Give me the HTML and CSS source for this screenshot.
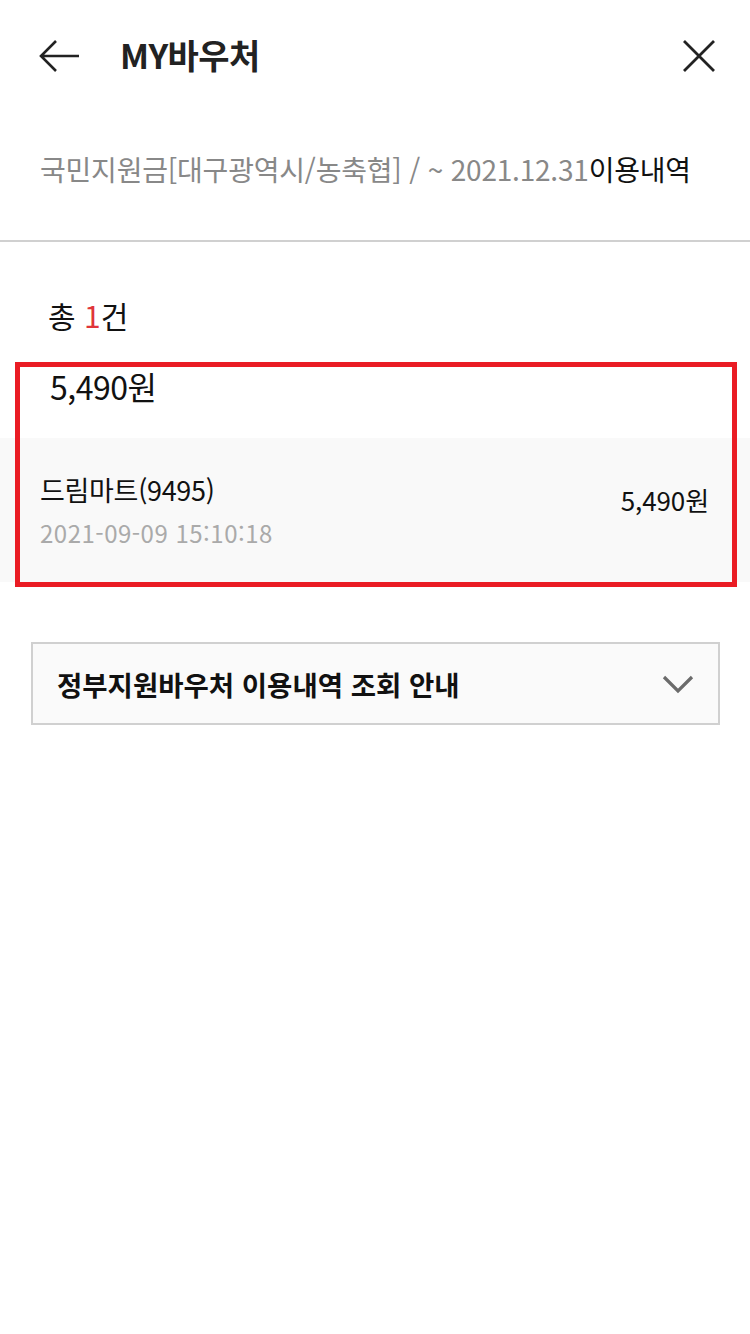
FILE: index.html
```html
<!DOCTYPE html>
<html lang="ko">

<head>
    <meta charset="UTF-8">
    <meta name="viewport" content="width=device-width, initial-scale=1.0">
    <title>MY바우처</title>
    <link rel="stylesheet" href="styles.css">
</head>

<body>
    <div class="header">
        <svg class="icon-back" width="42" height="34" viewBox="0 0 42 34">
            <path d="M40 17H3M17 2L2 17L17 32" fill="none" stroke="#222" stroke-width="2.6" />
        </svg>
        <h1 class="title">MY바우처</h1>
        <svg class="icon-close" width="34" height="34" viewBox="0 0 34 34">
            <path d="M2 2L32 32M32 2L2 32" fill="none" stroke="#222" stroke-width="2.8" />
        </svg>
    </div>

    <div class="voucher-name">
        <span class="gray">국민지원금[대구광역시/농축협] / ~ 2021.12.31</span>이용내역
    </div>

    <div class="count">총 <span class="red">1</span>건</div>

    <div class="history">
        <div class="total">5,490원</div>
        <div class="item">
            <div class="item-left">
                <p class="store">드림마트(9495)</p>
                <p class="date">2021-09-09 15:10:18</p>
            </div>
            <div class="item-price">5,490원</div>
        </div>
        <div class="highlight"></div>
    </div>

    <div class="guide">
        <span class="guide-title">정부지원바우처 이용내역 조회 안내</span>
        <svg class="icon-down" width="32" height="20" viewBox="0 0 32 20">
            <path d="M2 3L16 17L30 3" fill="none" stroke="#6b6b6b" stroke-width="3.2" />
        </svg>
    </div>
</body>

</html>
```

FILE: styles.css
```css
body {
    margin: 0;
    padding: 0;
    font-family: "Noto Sans CJK KR", "Noto Sans", sans-serif;
    background-color: #fff;
    color: #111;
}

p {
    margin: 0;
}

.header {
    height: 112px;
    display: flex;
    align-items: center;
    padding: 0 34px 0 39px;
}

.title {
    margin: 0 0 4px 39px;
    flex: 1;
    font-size: 34px;
    font-weight: bold;
    color: #222;
    letter-spacing: -0.6px;
}

.voucher-name {
    height: 130px;
    display: flex;
    align-items: center;
    padding: 0 40px 14px;
    font-size: 28px;
    letter-spacing: -0.2px;
    color: #111;
    border-bottom: 2px solid #d0d0d0;
    box-sizing: border-box;
    white-space: nowrap;
}

.voucher-name .gray {
    color: #888;
}

.count {
    height: 121px;
    padding: 50px 0 0 48px;
    font-size: 30px;
    line-height: 46px;
    box-sizing: border-box;
}

.count .red {
    color: #e0353a;
}

.history {
    position: relative;
}

.total {
    height: 75px;
    padding-left: 50px;
    font-size: 32px;
    line-height: 46px;
    letter-spacing: -0.5px;
}

.item {
    height: 144px;
    background-color: #f9f9f9;
    display: flex;
    align-items: center;
    padding: 0 41px 0 40px;
}

.item-left {
    flex: 1;
}

.store {
    font-size: 27px;
    line-height: 38px;
    letter-spacing: -0.3px;
}

.date {
    margin-top: 7px;
    font-size: 24px;
    color: #aaa;
    line-height: 34px;
    letter-spacing: 0.5px;
}

.item-price {
    font-size: 26px;
    letter-spacing: -0.1px;
    margin-bottom: 22px;
}

.highlight {
    position: absolute;
    top: -1px;
    left: 15px;
    width: 722px;
    height: 225px;
    border: 5px solid #ea1c24;
    box-sizing: border-box;
}

.guide {
    margin: 60px 30px 0 31px;
    height: 83px;
    border: 2px solid #d0d0d0;
    background-color: #fafafa;
    box-sizing: border-box;
    display: flex;
    align-items: center;
    padding: 0 24px;
}

.guide-title {
    flex: 1;
    font-size: 27.5px;
    font-weight: bold;
    letter-spacing: 0;
}
```
